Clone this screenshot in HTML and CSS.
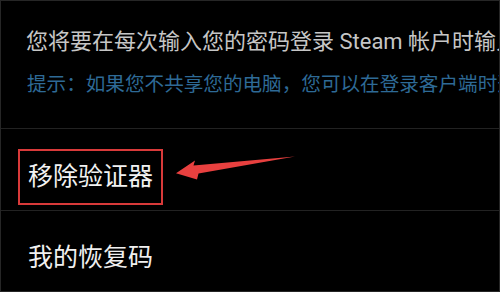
FILE: index.html
```html
<!DOCTYPE html>
<html lang="zh-CN">
<head>
<meta charset="utf-8">
<link rel="stylesheet" href="styles.css">
</head>
<body>
<div class="screen">
  <section class="info">
    <p class="desc">您将要在每次输入您的密码登录 Steam 帐户时输入 Steam 令牌代码。</p>
    <p class="hint">提示：如果您不共享您的电脑，您可以在登录客户端时选择“记住我的密码”。</p>
  </section>
  <div class="item item-remove">
    <span class="highlight">移除验证器</span>
  </div>
  <div class="item item-recovery">
    <span class="label">我的恢复码</span>
  </div>
  <svg class="arrow" width="500" height="292" viewBox="0 0 500 292">
    <polygon points="176,173.3 195,160.5 193.5,165.5 295,156.5 198.5,173.5 197,179.5" fill="#e8403f"/>
  </svg>
</div>
</body>
</html>
```
FILE: styles.css
```css
html, body {
  margin: 0;
  padding: 0;
  background: #000;
}
.screen {
  position: relative;
  width: 500px;
  height: 292px;
  box-sizing: border-box;
  border: 1px solid #262626;
  background: #000;
  overflow: hidden;
  font-family: "Roboto", "Noto Sans CJK SC", sans-serif;
}
.info {
  padding: 25px 0 0 25px;
  height: 102px;
  border-bottom: 1px solid #222;
  white-space: nowrap;
  overflow: hidden;
}
.desc {
  margin: 0;
  font-size: 22px;
  line-height: 31px;
  color: #c6c6c6;
}
.hint {
  margin: 15px 0 0 1px;
  font-size: 19.6px;
  line-height: 26px;
  color: #2e6a96;
}
.item {
  padding-left: 17px;
}
.item-remove {
  padding-top: 20px;
  padding-bottom: 5px;
  border-bottom: 1px solid #222;
}
.highlight {
  display: inline-block;
  border: 2px solid #d93a3a;
  padding: 0 8px;
  font-size: 25px;
  line-height: 52px;
  color: #f2f2f2;
}
.item-recovery {
  padding-top: 29px;
  padding-left: 27px;
}
.label {
  font-size: 25px;
  line-height: 36px;
  color: #f0f0f0;
}
.arrow {
  position: absolute;
  left: -1px;
  top: -1px;
}
```
